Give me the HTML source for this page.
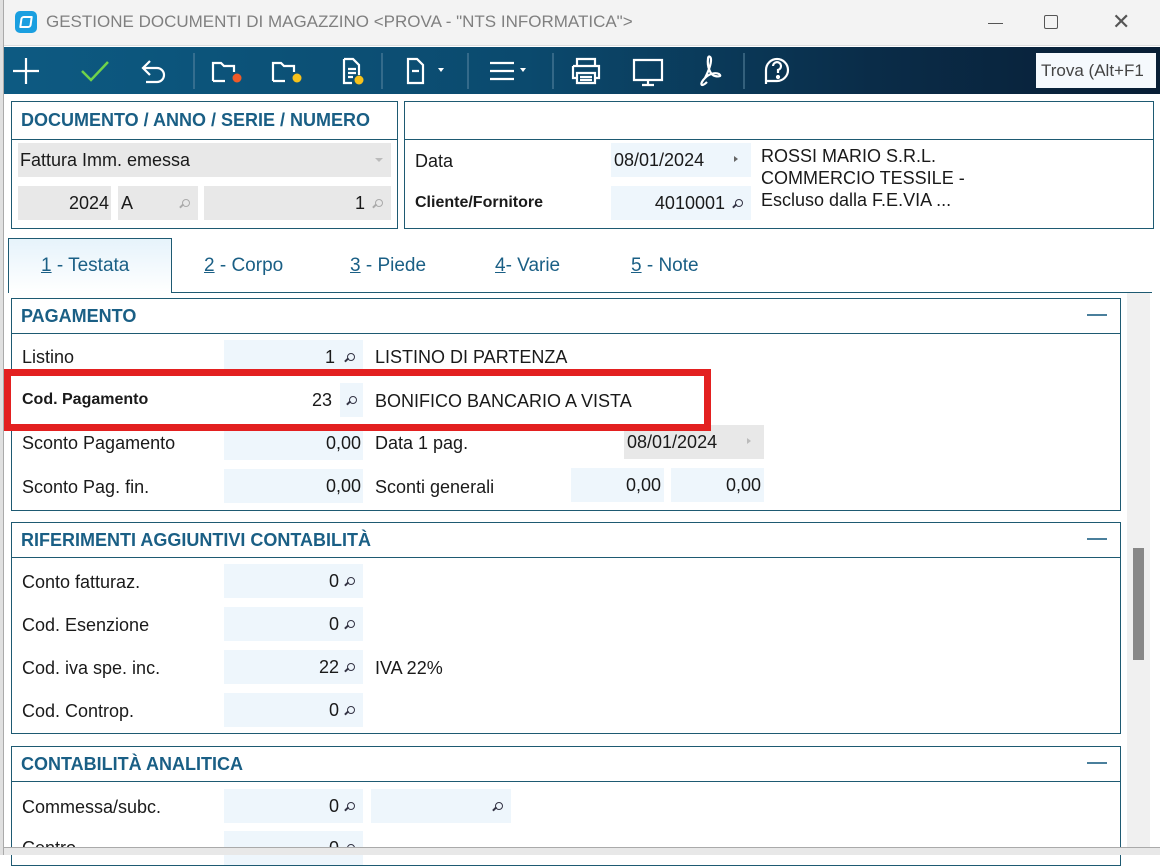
<!DOCTYPE html>
<html><head><meta charset="utf-8"><style>
*{margin:0;padding:0;box-sizing:border-box}
body{width:1160px;height:855px;overflow:hidden;background:#fff;font-family:"Liberation Sans",sans-serif;position:relative;color:#1a1a1a}
.a{position:absolute}
.t{font-size:18px;white-space:nowrap}
.box{position:absolute;border:1px solid #1e5a72;background:#fff}
.hd{position:absolute;left:0;right:0;top:0;border-bottom:1px solid #1e5a72}
.h{position:absolute;left:9px;font-weight:bold;color:#1a5f85;font-size:18px;white-space:nowrap}
.f{position:absolute;background:#eef6fc;height:34px;font-size:18px;text-align:right;line-height:34px;white-space:nowrap}
.g{background:#e8e8e8}
.mn{position:absolute;width:20px;height:2px;background:#4a7f9c}
.ln{position:absolute;right:8px;top:13px;width:8px;height:8px;border:1.5px solid #334;border-radius:50%}
.ln:after{content:"";position:absolute;left:-4px;top:5px;width:5px;height:1.5px;background:#334;transform:rotate(-45deg)}
.ln.l{border-color:#aaa}.ln.l:after{background:#aaa}
</style></head><body>
<!-- title bar -->
<div class="a" style="left:0;top:0;width:1160px;height:46px;background:#f3f3f3;border-bottom:1px solid #ddd"></div>
<div class="a" style="left:15px;top:11px;width:22px;height:22px;background:#1a9fe0;border-radius:5px"><div class="a" style="left:5px;top:5px;width:12px;height:12px;border:2px solid #fff;border-radius:3px 1px 3px 1px;transform:skewX(-8deg)"></div></div>
<div class="a t" style="left:46px;top:12px;color:#808080;font-size:17px">GESTIONE DOCUMENTI DI MAGAZZINO &lt;PROVA - "NTS INFORMATICA"&gt;</div>
<div class="a" style="left:988px;top:23px;width:15px;height:1px;background:#555"></div>
<div class="a" style="left:1044px;top:15px;width:14px;height:14px;border:1px solid #555;border-radius:2px"></div>
<div class="a t" style="left:1112px;top:9px;color:#555;font-size:22px">✕</div>
<!-- toolbar -->
<div class="a" style="left:4px;top:47px;width:1156px;height:47px;background:linear-gradient(90deg,#0d5a82 0%,#0b4a6e 45%,#0a2c48 75%,#081e35 100%)"></div>
<svg class="a" style="left:4px;top:47px" width="1030" height="47" viewBox="0 0 1030 47" fill="none" stroke="#fff" stroke-width="2.2">
<path d="M22 11v26M9 24h26"/>
<path d="M78 24l9 9 17-18" stroke="#6fd24a" stroke-width="2.5"/>
<path d="M146 14l-7 7 7 7M139 21h14a7 7 0 0 1 0 14h-11"/>
<line x1="190" y1="6" x2="190" y2="42" stroke="#5d88a3" stroke-width="1"/>
<path d="M209 34V16h8l3 3h10v6M209 34h12" /><circle cx="233" cy="31" r="4.5" fill="#f05a28" stroke="none"/>
<path d="M269 34V16h8l3 3h10v6M269 34h12"/><circle cx="293" cy="31" r="4.5" fill="#f7c21c" stroke="none"/>
<path d="M340 12h9l6 6v10M340 12v24h8M344 22h8M344 26h8M344 30h5"/><circle cx="355" cy="33" r="4.5" fill="#f7c21c" stroke="none"/>
<line x1="378" y1="6" x2="378" y2="42" stroke="#5d88a3" stroke-width="1"/>
<path d="M404 12h9l6 6v18h-15zM408 24h7"/><path d="M434 21h6l-3 4z" fill="#fff" stroke="none"/>
<line x1="464" y1="6" x2="464" y2="42" stroke="#5d88a3" stroke-width="1"/>
<path d="M486 16h24M486 24h24M486 32h24"/><path d="M516 21h6l-3 4z" fill="#fff" stroke="none"/>
<line x1="549" y1="6" x2="549" y2="42" stroke="#5d88a3" stroke-width="1"/>
<path d="M573 19v-7h18v7M569 19h26v12h-4M573 31h-4v-12M573 26h18v10h-18zM576 30h12M576 33h12"/>
<path d="M630 13h28v20h-28zM644 33v5M638 38h12"/>
<path d="M703 35c-6 6-8 2-2-4 4-4 10-6 14-4 3 2 0 3-4 2-5-1-8-10-7-17 0-4 3-3 3 1 0 5-3 12-6 18"/>
<line x1="740" y1="6" x2="740" y2="42" stroke="#5d88a3" stroke-width="1"/>
<path d="M762 37v-14a11 11 0 1 1 11 11h-11z"/>
<path d="M769 19a4 4 0 1 1 5 4v3" /><circle cx="774" cy="30" r="1" fill="#fff"/>
</svg>
<div class="a" style="left:1036px;top:53px;width:120px;height:35px;background:#f5f9fd;font-size:17px;line-height:35px;padding-left:5px;color:#444;white-space:nowrap;overflow:hidden">Trova (Alt+F1</div>
<!-- doc box -->
<div class="box" style="left:11px;top:101px;width:387px;height:128px"><div class="hd" style="height:38px"></div><div class="h" style="top:8px">DOCUMENTO / ANNO / SERIE / NUMERO</div></div>
<div class="f g" style="left:18px;top:143px;width:373px;text-align:left;padding-left:2px">Fattura Imm. emessa<span class="a" style="right:8px;top:15px;border:4px solid transparent;border-top-color:#bbb"></span></div>
<div class="f g" style="left:18px;top:186px;width:93px;padding-right:2px">2024</div>
<div class="f g" style="left:118px;top:186px;width:80px;text-align:left;padding-left:3px">A<span class="ln l"></span></div>
<div class="f g" style="left:204px;top:186px;width:187px;padding-right:26px">1<span class="ln l"></span></div>
<div class="box" style="left:404px;top:101px;width:750px;height:128px"><div class="hd" style="height:38px"></div></div>
<div class="a t" style="left:415px;top:151px">Data</div>
<div class="a t" style="left:415px;top:194px;font-weight:bold;font-size:16px">Cliente/Fornitore</div>
<div class="f" style="left:611px;top:143px;width:140px;text-align:left;padding-left:3px">08/01/2024<span class="a" style="right:10px;top:13px;border:3px solid transparent;border-left:4px solid #666"></span></div>
<div class="f" style="left:611px;top:186px;width:140px;padding-right:26px">4010001<span class="ln"></span></div>
<div class="a t" style="left:761px;top:145px;line-height:22px">ROSSI MARIO S.R.L.<br>COMMERCIO TESSILE -<br>Escluso dalla F.E.VIA ...</div>
<!-- tabs -->
<div class="a" style="left:8px;top:292px;width:1144px;height:1px;background:#1e5a72"></div>
<div class="a" style="left:8px;top:238px;width:164px;height:55px;border:1px solid #1e5a72;border-bottom:none;background:linear-gradient(#e6f3fb,#fff)"></div>
<div class="a t" style="left:41px;top:255px;color:#1a5f85;font-size:19px"><u>1</u> - Testata</div>
<div class="a t" style="left:204px;top:255px;color:#1a5f85;font-size:19px"><u>2</u> - Corpo</div>
<div class="a t" style="left:350px;top:255px;color:#1a5f85;font-size:19px"><u>3</u> - Piede</div>
<div class="a t" style="left:495px;top:255px;color:#1a5f85;font-size:19px"><u>4</u>- Varie</div>
<div class="a t" style="left:631px;top:255px;color:#1a5f85;font-size:19px"><u>5</u> - Note</div>
<!-- scrollbar -->
<div class="a" style="left:1127px;top:293px;width:23px;height:555px;background:#f0f0f0"></div>
<div class="a" style="left:1133px;top:548px;width:11px;height:112px;background:#888"></div>
<!-- pagamento -->
<div class="box" style="left:11px;top:298px;width:1110px;height:213px"><div class="hd" style="height:35px"></div><div class="h" style="top:7px">PAGAMENTO</div><div class="mn" style="right:13px;top:15px"></div></div>
<div class="a t" style="left:22px;top:347px">Listino</div>
<div class="f" style="left:224px;top:340px;width:139px;padding-right:28px">1<span class="ln"></span></div>
<div class="a t" style="left:375px;top:347px">LISTINO DI PARTENZA</div>
<div class="a t" style="left:22px;top:433px">Sconto Pagamento</div>
<div class="f" style="left:224px;top:426px;width:139px;padding-right:2px">0,00</div>
<div class="a t" style="left:375px;top:433px">Data 1 pag.</div>
<div class="f g" style="left:624px;top:425px;width:140px;text-align:left;padding-left:3px">08/01/2024<span class="a" style="right:10px;top:13px;border:3px solid transparent;border-left:4px solid #bbb"></span></div>
<div class="a" style="left:4px;top:369px;width:707px;height:62px;border:7px solid #e32020;background:#fff"></div>
<div class="a t" style="left:22px;top:391px;font-weight:bold;font-size:16px">Cod. Pagamento</div>
<div class="a t" style="left:312px;top:390px">23</div>
<div class="f" style="left:340px;top:383px;width:23px"><span class="ln" style="right:6px"></span></div>
<div class="a t" style="left:375px;top:391px">BONIFICO BANCARIO A VISTA</div>
<div class="a t" style="left:22px;top:477px">Sconto Pag. fin.</div>
<div class="f" style="left:224px;top:469px;width:139px;padding-right:2px">0,00</div>
<div class="a t" style="left:375px;top:477px">Sconti generali</div>
<div class="f" style="left:571px;top:468px;width:93px;padding-right:3px">0,00</div>
<div class="f" style="left:671px;top:468px;width:93px;padding-right:3px">0,00</div>
<!-- riferimenti -->
<div class="box" style="left:11px;top:522px;width:1110px;height:212px"><div class="hd" style="height:35px"></div><div class="h" style="top:7px">RIFERIMENTI AGGIUNTIVI CONTABILITÀ</div><div class="mn" style="right:13px;top:15px"></div></div>
<div class="a t" style="left:22px;top:572px">Conto fatturaz.</div>
<div class="f" style="left:224px;top:564px;width:139px;padding-right:24px">0<span class="ln"></span></div>
<div class="a t" style="left:22px;top:615px">Cod. Esenzione</div>
<div class="f" style="left:224px;top:607px;width:139px;padding-right:24px">0<span class="ln"></span></div>
<div class="a t" style="left:22px;top:658px">Cod. iva spe. inc.</div>
<div class="f" style="left:224px;top:650px;width:139px;padding-right:24px">22<span class="ln"></span></div>
<div class="a t" style="left:375px;top:658px">IVA 22%</div>
<div class="a t" style="left:22px;top:701px">Cod. Controp.</div>
<div class="f" style="left:224px;top:693px;width:139px;padding-right:24px">0<span class="ln"></span></div>
<!-- contabilita -->
<div class="box" style="left:11px;top:746px;width:1110px;height:120px"><div class="hd" style="height:35px"></div><div class="h" style="top:7px">CONTABILITÀ ANALITICA</div><div class="mn" style="right:13px;top:15px"></div></div>
<div class="a t" style="left:22px;top:797px">Commessa/subc.</div>
<div class="f" style="left:224px;top:789px;width:139px;padding-right:24px">0<span class="ln"></span></div>
<div class="f" style="left:371px;top:789px;width:140px"><span class="ln"></span></div>
<div class="a t" style="left:22px;top:838px">Centro</div>
<div class="f" style="left:224px;top:831px;width:139px;padding-right:24px">0<span class="ln"></span></div>
<div class="a" style="left:0;top:847px;width:1160px;height:8px;background:#e8e8e8;border-top:1px solid #aaa"></div>
<div class="a" style="left:0;top:0;width:4px;height:855px;background:#e0e0e0;border-right:1px solid #aaa"></div>
</body></html>
